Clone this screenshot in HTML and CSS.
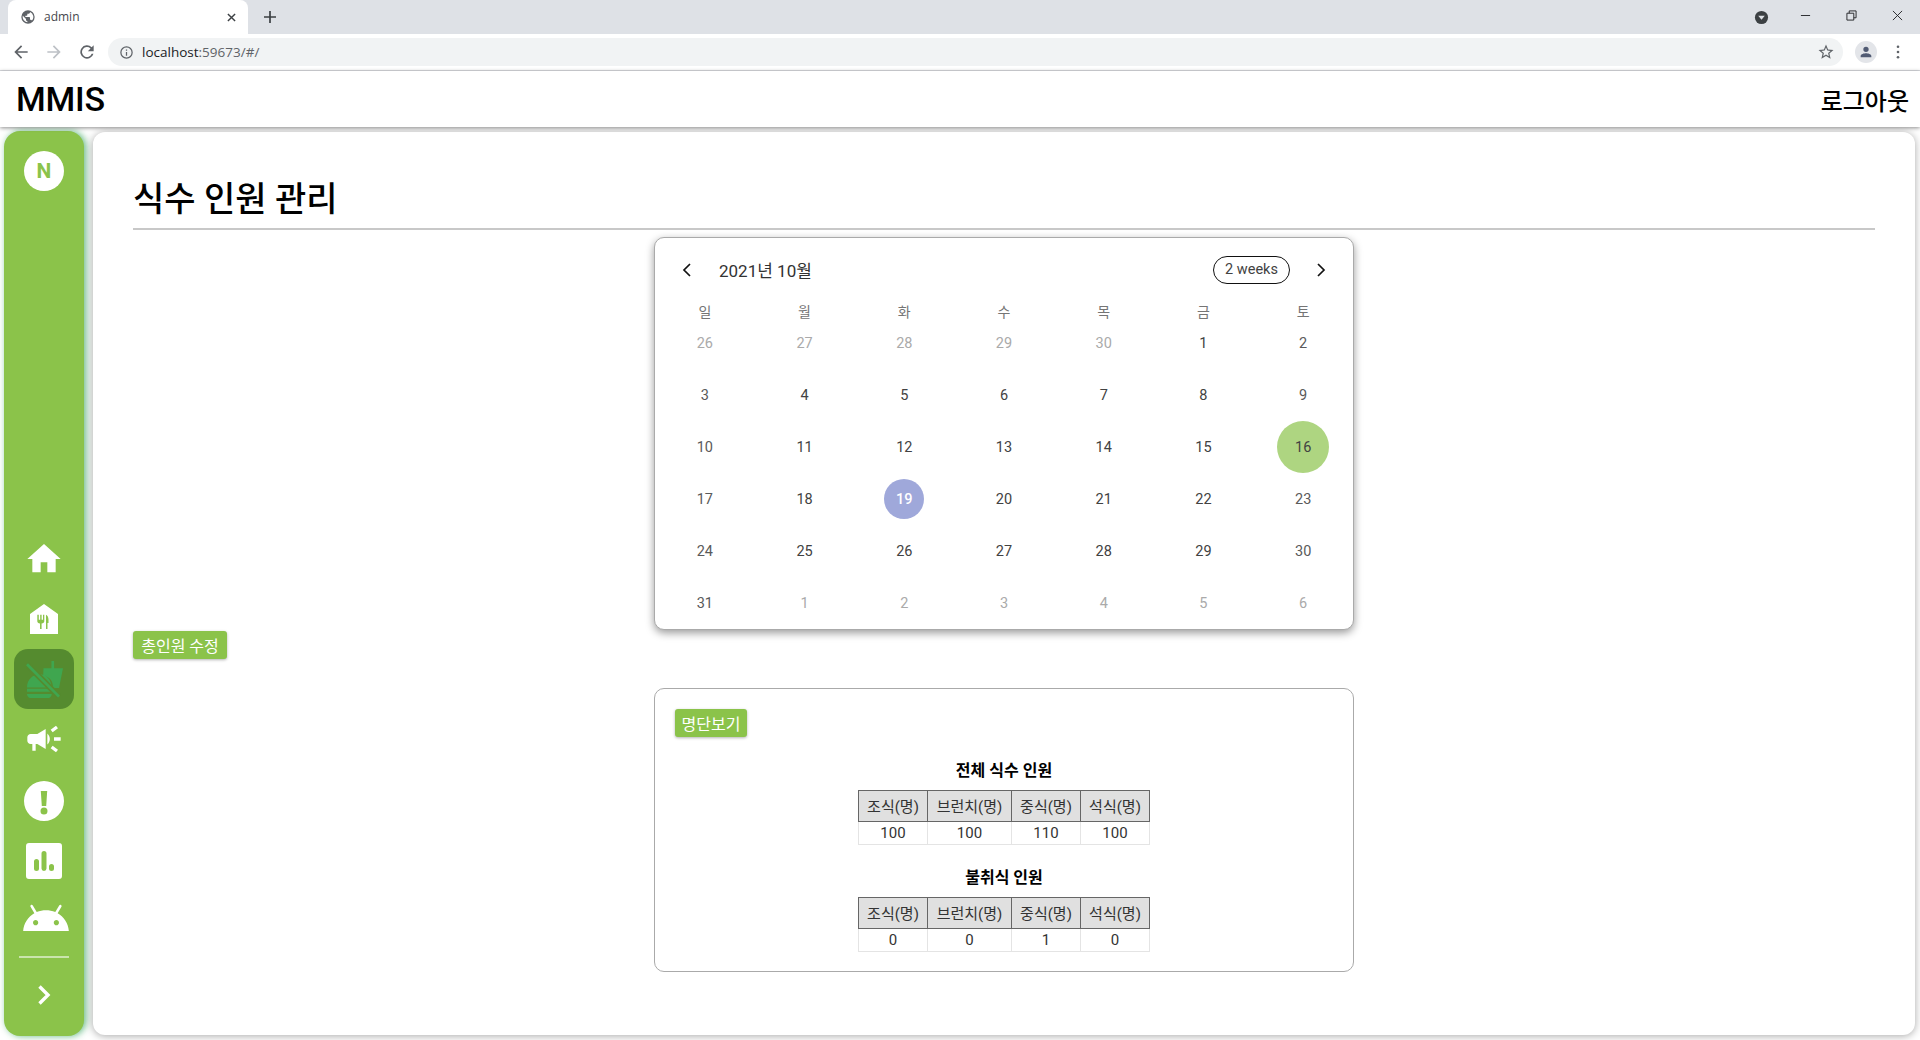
FILE: index.html
```html
<!DOCTYPE html>
<html>
<head lang="ko">
    <meta charset="utf-8">
    <title>admin</title>
    <link rel="stylesheet" href="styles.css">
</head>
<body>
<div class="tabstrip">
    <div class="tab">
        <svg class="tab-icon" viewBox="0 0 24 24"><path d="M12 2a10 10 0 1 0 0 20 10 10 0 0 0 0-20zm-1 17.9A8 8 0 0 1 4.2 10.2L9 15v1c0 1.1.9 2 2 2v1.9zm6.9-2.5c-.3-.8-1-1.400-1.900-1.400h-1v-3c0-.6-.4-1-1-1H8v-2h2c.6 0 1-.4 1-1V7h2c1.100 0 2-.9 2-2v-.4a8 8 0 0 1 2.900 12.800z"/></svg>
        <span class="tab-title">admin</span>
        <svg class="tab-close" viewBox="0 0 10 10"><path d="M1 1l8 8M9 1l-8 8"/></svg>
    </div>
    <svg class="tab-new" viewBox="0 0 12 12"><path d="M6 0v12M0 6h12"/></svg>
    <div class="window-btns">
        <svg class="win-badge" viewBox="0 0 16 16"><circle cx="8" cy="8" r="7" fill="#3c4043"/><path d="M4.5 6h7L8 10.5z" fill="#dee1e6"/></svg>
        <svg class="win-icon" viewBox="0 0 12 12"><path d="M1 6h10"/></svg>
        <svg class="win-icon" viewBox="0 0 12 12"><path d="M1 3.5h7.5V11H1zM3.5 3.500V1H11v7.500H8.500"/></svg>
        <svg class="win-icon" viewBox="0 0 12 12"><path d="M1 1l10 10M11 1L1 11"/></svg>
    </div>
</div>
<div class="toolbar">
    <svg class="nav-btn" viewBox="0 0 24 24"><path d="M20 11H7.8l5.600-5.600L12 4l-8 8 8 8 1.400-1.400L7.800 13H20z"/></svg>
    <svg class="nav-btn off" viewBox="0 0 24 24"><path d="M4 11h12.200l-5.600-5.600L12 4l8 8-8 8-1.400-1.400 5.600-5.600H4z"/></svg>
    <svg class="nav-btn" viewBox="0 0 24 24"><path d="M17.650 6.350A8 8 0 1 0 19.730 14h-2.080a6 6 0 1 1-1.410-6.240L13 11h7V4z"/></svg>
    <div class="omnibox">
        <svg class="info-icon" viewBox="0 0 24 24"><path d="M11 7h2v2h-2zm0 4h2v6h-2zm1-9a10 10 0 1 0 0 20 10 10 0 0 0 0-20zm0 18a8 8 0 1 1 0-16 8 8 0 0 1 0 16z"/></svg>
        <span class="url">localhost<span class="url-rest">:59673/#/</span></span>
        <svg class="star-icon" viewBox="0 0 24 24"><path d="M22 9.240l-7.190-.62L12 2 9.190 8.630 2 9.240l5.460 4.730L5.820 21 12 17.270 18.180 21l-1.630-7.030zM12 15.400l-3.760 2.270 1-4.280-3.320-2.880 4.380-.38L12 6.100l1.710 4.040 4.380.38-3.320 2.880 1 4.280z"/></svg>
    </div>
    <div class="avatar">
        <svg viewBox="0 0 24 24"><path d="M12 12a4 4 0 1 0 0-8 4 4 0 0 0 0 8zm0 2c-2.700 0-8 1.300-8 4v2h16v-2c0-2.700-5.300-4-8-4z"/></svg>
    </div>
    <svg class="menu-dots" viewBox="0 0 4 16"><circle cx="2" cy="2" r="1.500"/><circle cx="2" cy="8" r="1.500"/><circle cx="2" cy="14" r="1.500"/></svg>
</div>

<header class="topbar">
    <span class="brand">MMIS</span>
    <span class="logout">로그아웃</span>
</header>

<div class="layout">
    <nav class="sidebar">
        <div class="profile">N</div>
        <div class="menu">
            <a class="menu-item">
                <svg class="ico-home" viewBox="0 0 24 24"><path d="M10 20v-6h4v6h5v-8h3L12 3 2 12h3v8z"/></svg>
            </a>
            <a class="menu-item">
                <svg class="ico-store" viewBox="0 0 28 30"><path fill-rule="evenodd" d="M14 0l14 10v20H0V10zM7.300 10.700V17.200c0 1.200 1 2 2.700 2.300V25h1.600v-5.500c1.700-.3 2.700-1.100 2.700-2.300V10.700h-1.300v5h-1.400v-5h-1.400v5H8.800v-5zM16 10.700V25h1.500v-6h1V15.700c0-2.500-1-4.500-2.500-5z"/></svg>
            </a>
            <a class="menu-item active">
                <svg class="ico-food" viewBox="0 0 112 112"><path d="M77 0h8v22h27l-12 60H82c0-22-10-34-30-40l1-20h24zM3 80c0-24 18-40 38-40s36 16 36 40zM3 84h77v9H3zM3 100h75c0 7-5 12-10 12H13c-5 0-10-5-10-12z"/><path class="slash-gap" d="M3 10l97 98"/><path class="slash" d="M3 10l97 98"/></svg>
            </a>
            <a class="menu-item">
                <svg class="ico-campaign" viewBox="0 0 24 24"><path d="M18 11v2h4v-2h-4zm-2 6.610c.96.71 2.210 1.650 3.200 2.390.4-.53.8-1.070 1.200-1.600-.99-.74-2.240-1.680-3.200-2.400-.4.54-.8 1.080-1.200 1.610zM20.400 5.600c-.4-.53-.8-1.070-1.200-1.600-.99.74-2.240 1.680-3.200 2.400.4.53.8 1.070 1.200 1.600.96-.72 2.210-1.650 3.200-2.400zM4 9c-1.100 0-2 .9-2 2v2c0 1.100.9 2 2 2h1v4h2v-4h1l5 3V6L8 9H4zm11.500 3c0-1.330-.58-2.530-1.500-3.350v6.690c.92-.81 1.500-2.010 1.500-3.340z"/></svg>
            </a>
            <a class="menu-item">
                <svg class="ico-alert" viewBox="0 0 40 40"><path fill-rule="evenodd" d="M20 0a20 20 0 1 0 0 40 20 20 0 0 0 0-40zM16.800 10h6.400l-1 15h-4.400zM20 26.500a3.500 3.500 0 1 1 0 7 3.500 3.500 0 0 1 0-7z"/></svg>
            </a>
            <a class="menu-item">
                <svg class="ico-chart" viewBox="0 0 36 36"><path fill-rule="evenodd" d="M3 0h30a3 3 0 0 1 3 3v30a3 3 0 0 1-3 3H3a3 3 0 0 1-3-3V3a3 3 0 0 1 3-3zM10.500 16a2.500 2.500 0 0 0-2.500 2.500v7a2.500 2.500 0 0 0 5 0v-7a2.500 2.500 0 0 0-2.500-2.500zM18 8a2.500 2.500 0 0 0-2.500 2.500v15a2.500 2.500 0 0 0 5 0v-15A2.500 2.500 0 0 0 18 8zM25.500 21a2.500 2.500 0 0 0-2.500 2.500v2a2.500 2.500 0 0 0 5 0v-2a2.500 2.500 0 0 0-2.500-2.500z"/></svg>
            </a>
            <a class="menu-item">
                <svg class="ico-android" viewBox="1 5 22 13"><path d="M17.600 9.480l1.840-3.180c.16-.31.04-.69-.26-.85-.29-.15-.65-.06-.83.22l-1.880 3.240c-2.860-1.210-6.080-1.210-8.940 0L5.650 5.670c-.19-.29-.58-.38-.87-.2-.28.18-.37.54-.22.83L6.400 9.480C3.300 11.250 1.280 14.440 1 18h22c-.28-3.560-2.300-6.750-5.400-8.520zM7 15.250c-.69 0-1.250-.56-1.250-1.250s.56-1.250 1.250-1.250 1.250.56 1.250 1.250-.56 1.250-1.250 1.250zm10 0c-.69 0-1.250-.56-1.250-1.250s.56-1.250 1.250-1.250 1.250.56 1.250 1.250-.56 1.250-1.250 1.250z"/></svg>
            </a>
        </div>
        <div class="divider"></div>
        <a class="expand">
            <svg viewBox="0 0 14 22"><path d="M2.500 2.500l8.500 8.500-8.500 8.500"/></svg>
        </a>
    </nav>

    <main class="content">
        <h1 class="page-title">식수 인원 관리</h1>

        <section class="calendar">
            <div class="cal-head">
                <svg class="cal-arrow" viewBox="0 0 10 16"><path d="M8 2L2 8l6 6"/></svg>
                <span class="cal-title">2021년 10월</span>
                <span class="cal-format">2 weeks</span>
                <svg class="cal-arrow next" viewBox="0 0 10 16"><path d="M2 2l6 6-6 6"/></svg>
            </div>
            <div class="cal-weekdays">
                <span>일</span><span>월</span><span>화</span><span>수</span><span>목</span><span>금</span><span>토</span>
            </div>
            <div class="cal-days">
                <span class="dim">26</span><span class="dim">27</span><span class="dim">28</span><span class="dim">29</span><span class="dim">30</span><span>1</span><span class="wknd">2</span>
                <span class="wknd">3</span><span>4</span><span>5</span><span>6</span><span>7</span><span>8</span><span class="wknd">9</span>
                <span class="wknd">10</span><span>11</span><span>12</span><span>13</span><span>14</span><span>15</span><span class="selected">16</span>
                <span class="wknd">17</span><span>18</span><span class="today"><b>19</b></span><span>20</span><span>21</span><span>22</span><span class="wknd">23</span>
                <span class="wknd">24</span><span>25</span><span>26</span><span>27</span><span>28</span><span>29</span><span class="wknd">30</span>
                <span class="wknd">31</span><span class="dim">1</span><span class="dim">2</span><span class="dim">3</span><span class="dim">4</span><span class="dim">5</span><span class="dim">6</span>
            </div>
        </section>

        <div class="edit-row"><button class="green-btn">총인원 수정</button></div>

        <section class="summary">
            <button class="green-btn small">명단보기</button>

            <h3 class="table-title first">전체 식수 인원</h3>
            <table class="count-table">
                <tr><th>조식(명)</th><th class="wide">브런치(명)</th><th>중식(명)</th><th>석식(명)</th></tr>
                <tr><td>100</td><td>100</td><td>110</td><td>100</td></tr>
            </table>

            <h3 class="table-title">불취식 인원</h3>
            <table class="count-table">
                <tr><th>조식(명)</th><th class="wide">브런치(명)</th><th>중식(명)</th><th>석식(명)</th></tr>
                <tr><td>0</td><td>0</td><td>1</td><td>0</td></tr>
            </table>
        </section>
    </main>
</div>
</body>
</html>
```

FILE: styles.css
```css
* {
    box-sizing: border-box;
}

html, body {
    margin: 0;
    height: 100%;
    overflow: hidden;
}

body {
    display: flex;
    flex-direction: column;
    background-color: #fff;
    font-family: Roboto, "Noto Sans CJK KR", sans-serif;
    color: #000;
}

/* browser chrome */
.tabstrip {
    display: flex;
    align-items: center;
    height: 34px;
    flex: none;
    background-color: #dee1e6;
    padding-left: 8px;
}

.tab {
    display: flex;
    align-items: center;
    width: 240px;
    height: 34px;
    padding: 0 12px;
    background-color: #fff;
    border-radius: 8px 8px 0 0;
}

.tab-icon {
    width: 16px;
    height: 16px;
    fill: #5f6368;
}

.tab-title {
    flex: 1;
    margin: -2px 0 0 8px;
    font-family: "Open Sans", "Noto Sans", sans-serif;
    font-size: 12px;
    color: #45474d;
}

.tab-close {
    width: 9px;
    height: 9px;
    fill: none;
    stroke: #3c4043;
    stroke-width: 1.6;
}

.tab-new {
    width: 12px;
    height: 12px;
    margin-left: 16px;
    fill: none;
    stroke: #3c4043;
    stroke-width: 1.7;
}

.window-btns {
    display: flex;
    align-items: center;
    margin-left: auto;
    padding-right: 17px;
}

.win-badge {
    width: 15px;
    height: 15px;
    margin-right: 31px;
}

.win-icon {
    width: 11px;
    height: 11px;
    margin-left: 35px;
    margin-top: -3px;
    fill: none;
    stroke: #202124;
    stroke-width: 1;
}

.win-badge + .win-icon {
    margin-left: 0;
}

.toolbar {
    display: flex;
    align-items: center;
    height: 37px;
    flex: none;
    padding: 0 8px 0 11px;
    background-color: #fff;
    border-bottom: 1px solid #dadce0;
}

.nav-btn {
    width: 20px;
    height: 20px;
    flex: none;
    margin-right: 13px;
    fill: #5f6368;
}

.nav-btn.off {
    fill: #bdc1c6;
}

.omnibox {
    display: flex;
    align-items: center;
    width: 1735px;
    height: 28px;
    flex: none;
    margin-left: -2px;
    padding: 0 12px 0 11px;
    background-color: #f1f3f4;
    border-radius: 14px;
}

.info-icon {
    width: 15px;
    height: 15px;
    fill: #5f6368;
}

.url {
    flex: 1;
    margin-left: 8px;
    font-family: "Open Sans", "Noto Sans", sans-serif;
    font-size: 13.5px;
    color: #202124;
}

.url-rest {
    color: #5f6368;
}

.star-icon {
    width: 18px;
    height: 18px;
    margin-right: -4px;
    fill: #5f6368;
}

.avatar {
    display: flex;
    align-items: center;
    justify-content: center;
    width: 22px;
    height: 22px;
    flex: none;
    margin-left: 12px;
    background-color: #e3e5e9;
    border-radius: 50%;
}

.avatar svg {
    width: 16px;
    height: 16px;
    fill: #515b73;
}

.menu-dots {
    width: 4px;
    height: 14px;
    flex: none;
    margin-left: 19px;
    fill: #5f6368;
}

/* app header */
.topbar {
    position: relative;
    display: flex;
    align-items: center;
    justify-content: space-between;
    height: 56px;
    flex: none;
    padding: 0 11px 0 16px;
    background-color: #fff;
    box-shadow: 0 1px 4px rgba(0, 0, 0, 0.45);
}

.brand {
    font-size: 34px;
    font-weight: 500;
    letter-spacing: -0.2px;
}

.logout {
    font-size: 24px;
    font-weight: 500;
}

.layout {
    display: flex;
    flex: 1;
    min-height: 0;
    padding: 4px 5px 4px 4px;
    gap: 9px;
}

/* sidebar */
.sidebar {
    display: flex;
    flex-direction: column;
    align-items: center;
    width: 80px;
    flex: none;
    background-color: #8bc34a;
    border-radius: 16px;
    box-shadow: 2px 0 7px rgba(76, 175, 110, 0.85);
}

.profile {
    display: flex;
    align-items: center;
    justify-content: center;
    width: 40px;
    height: 40px;
    margin-top: 20px;
    background-color: #fff;
    border-radius: 50%;
    color: #8bc34a;
    font-size: 21px;
    font-weight: 700;
}

.menu {
    display: flex;
    flex-direction: column;
    align-items: center;
    margin-top: 338px;
}

.menu-item {
    display: flex;
    align-items: center;
    justify-content: center;
    width: 60px;
    height: 60px;
    fill: #fff;
}

.menu-item.active {
    background-color: #558b2f;
    border-radius: 14px;
    fill: #3fa64f;
}

.ico-home {
    width: 40px;
    height: 40px;
}

.ico-store {
    width: 28px;
    height: 30px;
}

.ico-food {
    width: 37px;
    height: 37px;
}

.slash {
    fill: none;
    stroke: #3fa64f;
    stroke-width: 8;
}

.slash-gap {
    fill: none;
    stroke: #558b2f;
    stroke-width: 18;
}

.ico-campaign {
    width: 40px;
    height: 40px;
}

.ico-alert {
    width: 40px;
    height: 40px;
    margin-top: 4px;
}

.ico-chart {
    width: 36px;
    height: 36px;
    margin-top: 4px;
}

.ico-android {
    width: 46px;
    height: 27px;
    margin: -4px 0 0 3px;
}

.divider {
    width: 50px;
    height: 2px;
    margin-top: 7px;
    background-color: rgba(255, 255, 255, 0.55);
}

.expand {
    margin-top: 26px;
    height: 22px;
}

.expand svg {
    width: 14px;
    height: 22px;
    fill: none;
    stroke: #fff;
    stroke-width: 3.4;
}

/* main card */
.content {
    flex: 1;
    padding: 0 40px;
    margin: 1px 0 1px;
    background-color: #fff;
    border-radius: 12px;
    box-shadow: 0 1px 8px rgba(0, 0, 0, 0.35);
}

.page-title {
    height: 98px;
    margin: 0;
    padding-top: 45px;
    border-bottom: 2px solid #c8c8c8;
    font-size: 34px;
    font-weight: 500;
    line-height: 44px;
}

.calendar {
    width: 700px;
    height: 393px;
    margin: 7px auto 0;
    background-color: #fff;
    border: 1px solid #aaa;
    border-radius: 10px;
    box-shadow: 0 3px 8px rgba(0, 0, 0, 0.4);
}

.cal-head {
    display: flex;
    align-items: center;
    height: 56px;
    padding: 7px 27px 0 27px;
}

.cal-arrow {
    width: 10px;
    height: 16px;
    fill: none;
    stroke: #111;
    stroke-width: 1.7;
}

.cal-arrow.next {
    margin-left: 27px;
}

.cal-title {
    flex: 1;
    margin-left: 27px;
    font-size: 17px;
    color: #333;
}

.cal-format {
    width: 77px;
    height: 28px;
    margin-right: 0;
    transform: translateX(1px);
    border: 1px solid #111;
    border-radius: 14px;
    font-size: 14.5px;
    line-height: 26px;
    text-align: center;
    color: #424242;
}

.cal-weekdays,
.cal-days {
    display: grid;
    grid-template-columns: repeat(7, 1fr);
    text-align: center;
}

.cal-weekdays {
    height: 23px;
    padding-top: 6px;
    font-size: 14px;
    line-height: 24px;
    color: #757575;
}

.cal-days {
    grid-auto-rows: 52px;
    font-size: 14.5px;
    color: #424242;
}

.cal-days span {
    display: flex;
    align-items: center;
    justify-content: center;
}

.cal-days .wknd {
    color: #5a5a5a;
}

.cal-days .dim {
    color: #aaa;
}

.cal-days .selected {
    width: 52px;
    height: 52px;
    justify-self: center;
    background-color: #aed581;
    border-radius: 50%;
}

.cal-days .today b {
    display: flex;
    align-items: center;
    justify-content: center;
    width: 40px;
    height: 40px;
    background-color: #9fa8da;
    border-radius: 50%;
    color: #fff;
    font-weight: 500;
}

.edit-row {
    height: 28px;
    margin-top: 1px;
}

.green-btn {
    display: block;
    width: 94px;
    height: 28px;
    padding: 0;
    background-color: #8bc34a;
    border: 0;
    border-radius: 3px;
    box-shadow: 0 1px 3px rgba(0, 0, 0, 0.3);
    color: #fff;
    font-family: Roboto, "Noto Sans CJK KR", sans-serif;
    font-size: 16px;
    font-weight: 400;
}

.green-btn.small {
    width: 72px;
}

.summary {
    width: 700px;
    height: 284px;
    margin: 29px auto 0;
    padding: 20px 20px 0;
    border: 1px solid #aaa;
    border-radius: 10px;
}

.table-title {
    height: 24px;
    margin: 0 0 7px;
    font-size: 16px;
    font-weight: 700;
    line-height: 24px;
    text-align: center;
}

.table-title.first {
    margin-top: 22px;
}

.count-table + .table-title {
    margin-top: 21px;
}

.count-table {
    width: 289px;
    margin: 0 auto;
    border-collapse: collapse;
    table-layout: fixed;
    font-size: 15px;
    color: #333;
    text-align: center;
}

.count-table th {
    width: 69px;
    height: 31px;
    padding: 0 0 2px;
    background-color: #e0e0e0;
    border: 1px solid #666;
    font-weight: 400;
}

.count-table th.wide {
    width: 84px;
}

.count-table td {
    height: 23px;
    padding: 0;
    border: 1px solid #e4e4e4;
}
```
